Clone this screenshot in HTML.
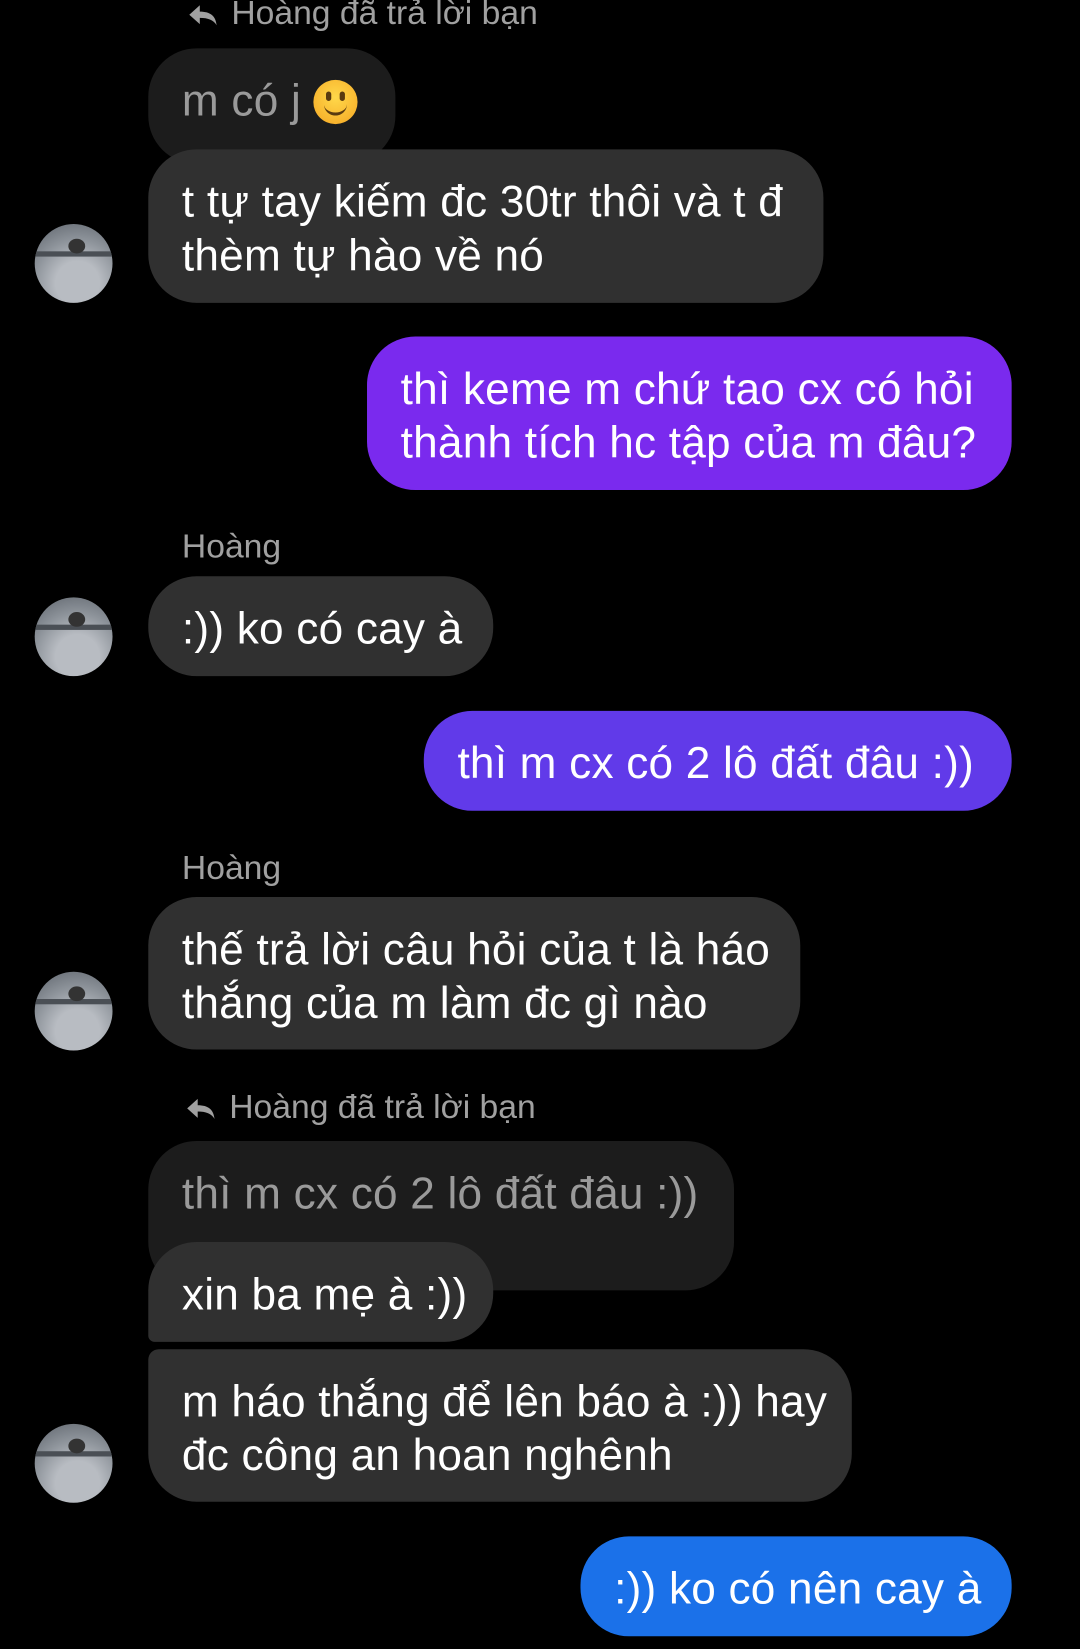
<!DOCTYPE html>
<html><head><meta charset="utf-8"><style>
html,body{margin:0;padding:0;background:#000;width:1080px;height:1649px;overflow:hidden}
#w{position:absolute;left:0;top:0;width:1027px;height:1568px;transform:scale(1.05161);transform-origin:0 0;font-family:"Liberation Sans",sans-serif}
.b{position:absolute;border-radius:46px;color:#fff;font-size:42px;line-height:51px;box-sizing:border-box;padding-left:32px;letter-spacing:0.2px;white-space:nowrap}
.g{background:#303030}
.q{background:#1c1c1c;color:#9a9a9a}
.lbl{position:absolute;color:#a0a0a0;font-size:32px;letter-spacing:0px;white-space:nowrap}
.av{position:absolute;left:33px;width:74px;height:75px;border-radius:50%;background:radial-gradient(circle at 55% 75%,#b8bcc2 0 30%,#8d939a 60%,#5a6068 100%);overflow:hidden}
.av:before{content:"";position:absolute;left:0;right:0;top:26px;height:5px;background:#4a4f55}
.av:after{content:"";position:absolute;left:32px;top:14px;width:16px;height:14px;border-radius:50%;background:#333}
</style></head><body><div id="w">
<div class="lbl" style="left:178px;top:-6px"><svg width="30" height="22" viewBox="0 0 30 22" style="vertical-align:-2px;margin-right:12px"><path d="M12 2 L2 11 L12 20 L12 14 C20 14 25 16 28 21 C27 12 22 8 12 8 Z" fill="#a0a0a0"/></svg>Hoàng đã trả lời bạn</div>
<div class="b q" style="left:141px;top:46px;width:235px;height:110px;padding-top:24px">m có j <span style="display:inline-block;width:42px;height:42px;border-radius:50%;background:radial-gradient(circle at 50% 40%,#ffd84a,#f5a623);vertical-align:-8px;position:relative"><span style="position:absolute;left:12px;top:11px;width:5px;height:9px;background:#5a3a10;border-radius:3px"></span><span style="position:absolute;left:25px;top:11px;width:5px;height:9px;background:#5a3a10;border-radius:3px"></span><span style="position:absolute;left:10px;top:18px;width:22px;height:13px;border-bottom:3px solid #5a3a10;border-radius:0 0 12px 12px"></span></span></div>
<div class="b g" style="left:141px;top:142px;width:642px;height:146px;padding-top:24px">t tự tay kiếm đc 30tr thôi và t đ<br>thèm tự hào về nó</div>
<div class="av" style="top:213px"></div>
<div class="b" style="left:349px;top:320px;width:613px;height:146px;padding-top:24px;background:#7a2aee">thì keme m chứ tao cx có hỏi<br>thành tích hc tập của m đâu?</div>
<div class="lbl" style="left:173px;top:501px">Hoàng</div>
<div class="b g" style="left:141px;top:548px;width:328px;height:95px;padding-top:24px">:)) ko có cay à</div>
<div class="av" style="top:568px"></div>
<div class="b" style="left:403px;top:676px;width:559px;height:95px;padding-top:24px;background:#613ae9">thì m cx có 2 lô đất đâu :))</div>
<div class="lbl" style="left:173px;top:807px">Hoàng</div>
<div class="b g" style="left:141px;top:853px;width:620px;height:145px;padding-top:24px">thế trả lời câu hỏi của t là háo<br>thắng của m làm đc gì nào</div>
<div class="av" style="top:924px"></div>
<div class="lbl" style="left:176px;top:1034px"><svg width="30" height="22" viewBox="0 0 30 22" style="vertical-align:-2px;margin-right:12px"><path d="M12 2 L2 11 L12 20 L12 14 C20 14 25 16 28 21 C27 12 22 8 12 8 Z" fill="#a0a0a0"/></svg>Hoàng đã trả lời bạn</div>
<div class="b q" style="left:141px;top:1085px;width:557px;height:142px;padding-top:24px">thì m cx có 2 lô đất đâu :))</div>
<div class="b g" style="left:141px;top:1181px;width:328px;height:95px;padding-top:24px;border-radius:46px 46px 46px 6px">xin ba mẹ à :))</div>
<div class="b g" style="left:141px;top:1283px;width:669px;height:145px;padding-top:24px;border-radius:10px 46px 46px 46px">m háo thắng để lên báo à :)) hay<br>đc công an hoan nghênh</div>
<div class="av" style="top:1354px"></div>
<div class="b" style="left:552px;top:1461px;width:410px;height:95px;padding-top:24px;background:#1b71e9">:)) ko có nên cay à</div>
</div></body></html>
